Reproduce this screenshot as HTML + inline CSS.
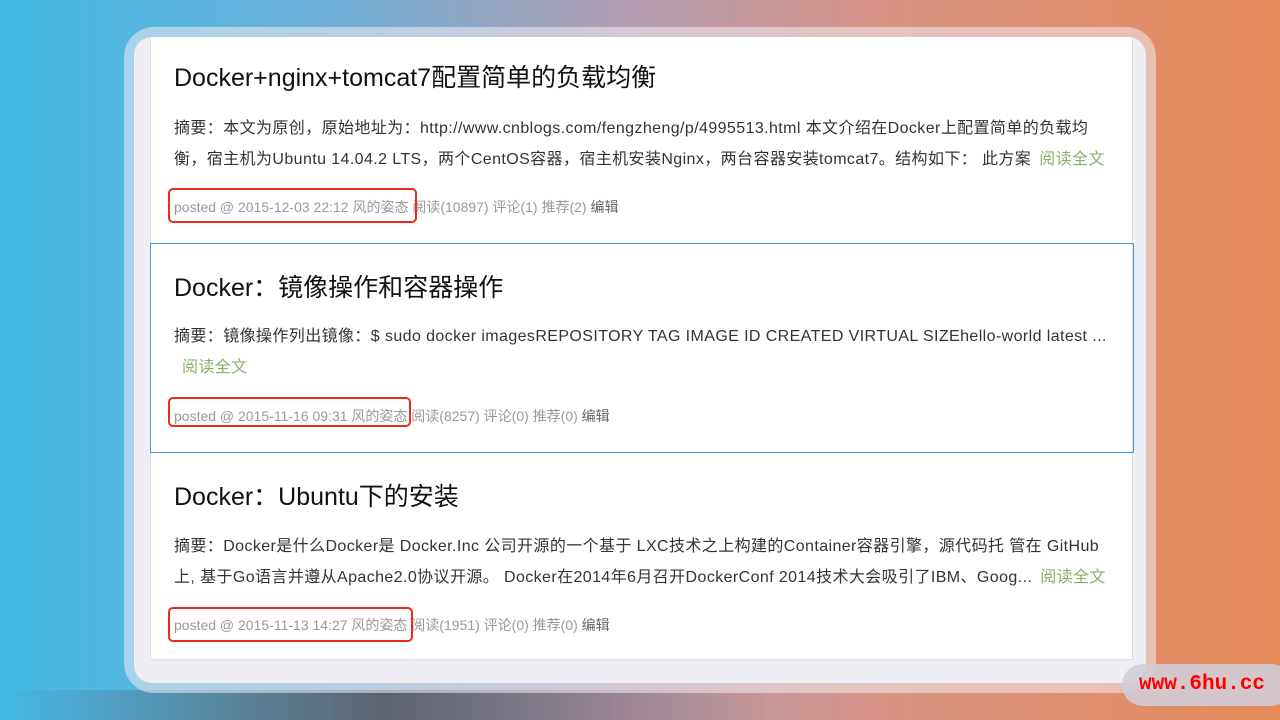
<!DOCTYPE html>
<html><head><meta charset="utf-8"><style>
*{margin:0;padding:0;box-sizing:border-box}
body{width:1280px;height:720px;overflow:hidden;position:relative;font-family:"Liberation Sans","Noto Sans CJK SC",sans-serif;
background:linear-gradient(90deg,#43b9e6 0%,#6cb0d8 25%,#b59cb0 50%,#d99282 70%,#e68a5a 100%)}
.shade{position:absolute;left:0;right:0;bottom:0;height:30px;background:linear-gradient(90deg,rgba(40,40,60,0),rgba(70,40,30,.55) 30%,rgba(0,0,0,0) 60%)}
.frame{position:absolute;left:124px;top:27px;width:1032px;height:666px;border-radius:30px;background:rgba(240,235,240,.55)}
.inner{position:absolute;left:134px;top:37px;width:1012px;height:646px;border-radius:18px;background:#eeeef4;overflow:hidden}
.panel{position:absolute;left:16px;top:0;width:983px;height:623px;background:#fff;border:1px solid #ddd;border-top:none}
.item{position:absolute;left:0;width:983px}
.item.sel{border:1px solid #3aa0e0;left:-1px;width:984px}
h2{font-size:25px;font-weight:normal;color:#111;position:absolute;left:23px;white-space:nowrap}
.sum{position:absolute;left:23px;width:960px;font-size:16px;line-height:31px;color:#333;white-space:nowrap;letter-spacing:0.4px}
.more{color:#8aaf6a;margin-left:8px}
.meta{position:absolute;left:23px;font-size:14px;color:#999;white-space:nowrap}
.meta .ed{color:#666}
.box{position:absolute;border:2.5px solid #f02a18;border-radius:5px}
.wm{position:absolute;left:1122px;top:664px;width:170px;height:42px;border-radius:21px;background:rgba(210,205,215,.9);color:#f00;font-family:"Liberation Mono",monospace;font-size:21px;font-weight:bold;line-height:42px;padding-left:17px}
</style></head><body>
<div class="shade"></div>
<div class="frame"></div>
<div class="inner"><div class="panel">
<h2 style="top:21px">Docker+nginx+tomcat7配置简单的负载均衡</h2>
<div class="sum" style="top:76px">摘要：本文为原创，原始地址为：http://www.cnblogs.com/fengzheng/p/4995513.html 本文介绍在Docker上配置简单的负载均<br>衡，宿主机为Ubuntu 14.04.2 LTS，两个CentOS容器，宿主机安装Nginx，两台容器安装tomcat7。结构如下： 此方案<span class="more">阅读全文</span></div>
<div class="meta" style="top:160px">posted @ 2015-12-03 22:12 风的姿态 阅读(10897) 评论(1) 推荐(2) <span class="ed">编辑</span></div>
<div class="box" style="left:17px;top:151px;width:249px;height:35px"></div>

<div class="item sel" style="top:206px;height:210px"></div>
<h2 style="top:231px">Docker：镜像操作和容器操作</h2>
<div class="sum" style="top:284px">摘要：镜像操作列出镜像：$ sudo docker imagesREPOSITORY TAG IMAGE ID CREATED VIRTUAL SIZEhello-world latest ...<br><span class="more">阅读全文</span></div>
<div class="meta" style="top:369px">posted @ 2015-11-16 09:31 风的姿态 阅读(8257) 评论(0) 推荐(0) <span class="ed">编辑</span></div>
<div class="box" style="left:17px;top:360px;width:243px;height:30px"></div>

<h2 style="top:440px">Docker：Ubuntu下的安装</h2>
<div class="sum" style="top:494px">摘要：Docker是什么Docker是 Docker.Inc 公司开源的一个基于 LXC技术之上构建的Container容器引擎，源代码托 管在 GitHub<br>上, 基于Go语言并遵从Apache2.0协议开源。 Docker在2014年6月召开DockerConf 2014技术大会吸引了IBM、Goog...<span class="more">阅读全文</span></div>
<div class="meta" style="top:578px">posted @ 2015-11-13 14:27 风的姿态 阅读(1951) 评论(0) 推荐(0) <span class="ed">编辑</span></div>
<div class="box" style="left:17px;top:570px;width:245px;height:35px"></div>
</div></div>
<div class="wm">www.6hu.cc</div>
</body></html>
